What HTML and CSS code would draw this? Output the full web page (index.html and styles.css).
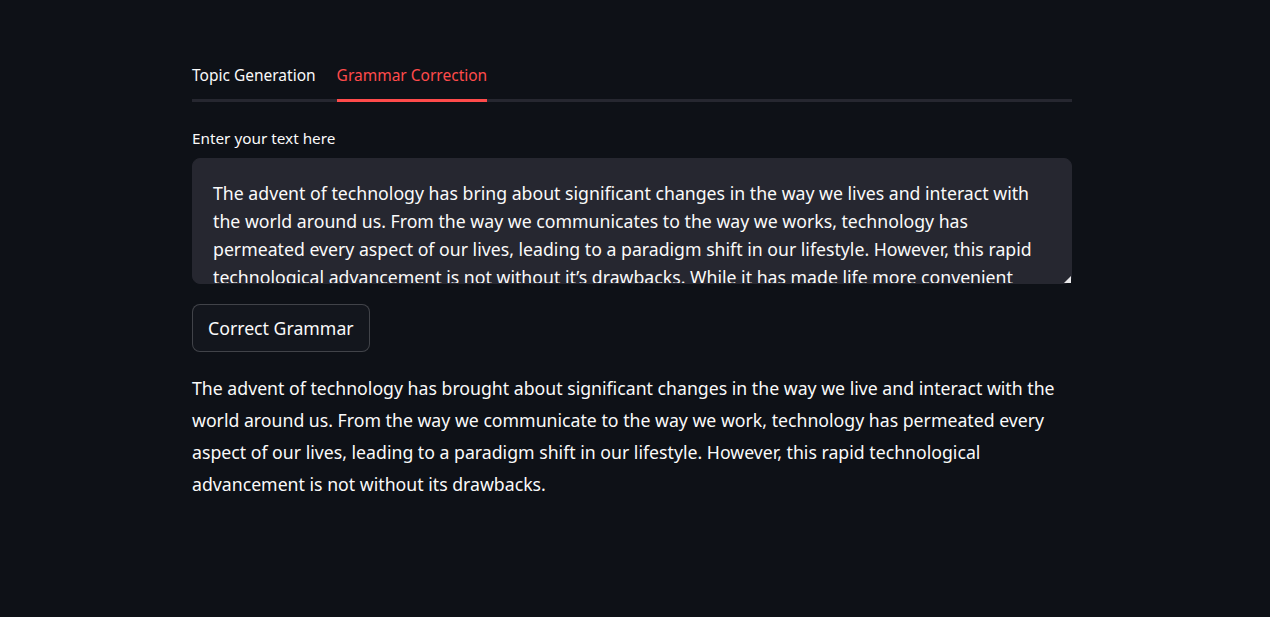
FILE: index.html
```html
<!DOCTYPE html>
<html lang="en">
<head>
<meta charset="utf-8">
<title>Grammar Correction</title>
<link rel="stylesheet" href="styles.css">
</head>
<body>
<main class="main">
  <div class="block">
    <div class="tabs">
      <div class="tab">Topic Generation</div>
      <div class="tab tab-active">Grammar Correction</div>
    </div>
    <div class="panel">
      <label class="label" for="txt">Enter your text here</label>
      <div class="textarea-wrap">
        <textarea id="txt" class="textarea">The advent of technology has bring about significant changes in the way we lives and interact with the world around us. From the way we communicates to the way we works, technology has permeated every aspect of our lives, leading to a paradigm shift in our lifestyle. However, this rapid technological advancement is not without it’s drawbacks. While it has made life more convenient</textarea>
        <span class="grip"></span>
      </div>
      <button class="btn">Correct Grammar</button>
      <p class="output">The advent of technology has brought about significant changes in the way we live and interact with the world around us. From the way we communicate to the way we work, technology has permeated every aspect of our lives, leading to a paradigm shift in our lifestyle. However, this rapid technological advancement is not without its drawbacks.</p>
    </div>
  </div>
</main>
</body>
</html>
```

FILE: styles.css
```css
html, body {
  margin: 0;
  padding: 0;
  background: #0e1117;
  color: #fafafa;
  font-family: "Noto Sans", "Open Sans", sans-serif;
}
.main {
  display: flex;
  justify-content: center;
  padding-top: 51px;
  padding-right: 6px;
}
.block {
  width: 880px;
}
.tabs {
  display: flex;
  gap: 21px;
  border-bottom: 3px solid #262730;
  box-sizing: border-box;
  height: 51px;
}
.tab {
  font-size: 15.5px;
  display: flex;
  align-items: center;
  color: #fafafa;
  margin-bottom: -3px;
  border-bottom: 3px solid transparent;
}
.tab-active {
  color: #ff4b4b;
  border-bottom-color: #ff4b4b;
}
.panel {
  display: flex;
  flex-direction: column;
  align-items: flex-start;
  padding-top: 24px;
}
.label {
  font-size: 15.3px;
  line-height: 24px;
  height: 24px;
  margin-bottom: 8px;
}
.textarea-wrap {
  position: relative;
  width: 880px;
  margin: 0 0 20px 0;
}
.textarea {
  display: block;
  width: 880px;
  height: 126px;
  box-sizing: border-box;
  background: #262730;
  color: #fafafa;
  border: 1px solid #262730;
  border-radius: 8px;
  padding: 20px 19px 0 20px;
  font-family: inherit;
  font-size: 17.7px;
  line-height: 28px;
  resize: none;
  overflow: hidden;
  outline: none;
  margin: 0;
}
.grip {
  position: absolute;
  right: 1px;
  bottom: 1px;
  width: 0;
  height: 0;
  border-left: 7px solid transparent;
  border-bottom: 7px solid #e8e8ea;
}
.btn {
  height: 48px;
  box-sizing: border-box;
  padding: 0 15px;
  background: #13161d;
  color: #fafafa;
  border: 1px solid rgba(250, 250, 250, 0.2);
  border-radius: 8px;
  font-family: inherit;
  font-size: 17.7px;
}
.output {
  margin: 20px 0 0 0;
  font-size: 17.7px;
  line-height: 32px;
}
```
